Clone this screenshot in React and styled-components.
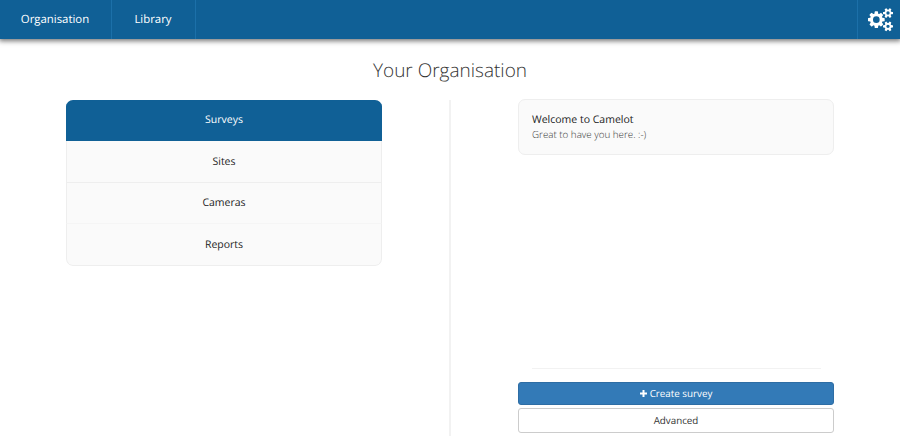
import React from "react";
import styled, { createGlobalStyle, css } from "styled-components";

const GlobalStyle = createGlobalStyle`
  * { box-sizing: border-box; }
  body {
    margin: 0;
    overflow: hidden;
    background: #fff;
    color: #333;
    font-family: "Open Sans", "Noto Sans", sans-serif;
    font-size: 10.5px;
    text-rendering: geometricPrecision;
  }
`;

const Page = styled.div`
  height: 442px;
  display: flex;
  flex-direction: column;
`;

const NavBar = styled.nav`
  flex: none;
  height: 39px;
  display: flex;
  background: #106096;
  box-shadow: 0 1px 5px 1px rgba(0, 0, 0, 0.55);
`;

const NavItem = styled.a`
  width: ${(p) => p.$width}px;
  display: flex;
  align-items: center;
  justify-content: center;
  border-right: 1px solid #1c70a9;
  padding-right: 1px;
  color: #fff;
  font-size: 11.4px;
  line-height: 17px;
`;

const SettingsItem = styled.a`
  width: 43px;
  margin-left: auto;
  padding: 1px 0 0 2px;
  display: flex;
  align-items: center;
  justify-content: center;
  border-left: 1px solid #1c70a9;
  color: #fff;
`;

const Title = styled.h1`
  margin: 17px 0 0;
  height: 44px;
  text-align: center;
  font-size: 19px;
  line-height: 28px;
  font-weight: 300;
`;

const Content = styled.main`
  height: 336px;
  display: grid;
  grid-template-columns: 316px 2px 316px;
  justify-content: space-between;
  padding: 0 66px;
`;

const Menu = styled.ul`
  align-self: start;
  height: 166px;
  margin: 0;
  padding: 0;
  list-style: none;
  display: grid;
  grid-template-rows: 41px 42px 41px 42px;
  background: #fafafa;
  border-radius: 7px;
  overflow: hidden;
`;

const MenuItem = styled.li`
  display: flex;
  align-items: center;
  justify-content: center;
  border: solid #eee;
  border-width: 0 1px 1px;
  color: #222;
  ${(p) =>
    p.$active &&
    css`
      background: #106096;
      border-color: #106096;
      color: #fff;
    `}
  &:nth-child(3) {
    border-bottom-color: #f5f5f5;
  }
  &:last-child {
    border-radius: 0 0 7px 7px;
  }
`;

const Divider = styled.div`
  background: #f2f2f2;
`;

const SidePanel = styled.section`
  display: flex;
  flex-direction: column;
`;

const Notice = styled.article`
  height: 56px;
  margin-top: -1px;
  padding: 14px 13px;
  border: 1px solid #eee;
  border-radius: 7px;
  background: #fafafa;
  line-height: 13.5px;
`;

const NoticeTitle = styled.div`
  color: #222;
`;

const NoticeText = styled.div`
  font-size: 9.8px;
  font-weight: 300;
`;

const Actions = styled.div`
  margin-top: auto;
  padding-bottom: 3px;
  display: flex;
  flex-direction: column;
  gap: 3px;
`;

const Rule = styled.hr`
  width: 289px;
  height: 1px;
  margin: 0 auto 10px;
  border: 0;
  background: #f2f2f2;
`;

const Button = styled.button`
  height: ${(p) => (p.$primary ? 23 : 25)}px;
  padding: 0;
  display: flex;
  align-items: center;
  justify-content: center;
  gap: 3px;
  border: 1px solid ${(p) => (p.$primary ? "#2e6da4" : "#ccc")};
  border-radius: 3px;
  background: ${(p) => (p.$primary ? "#337ab7" : "#fff")};
  color: ${(p) => (p.$primary ? "#fff" : "#333")};
  font: 9.8px/14px "Open Sans", "Noto Sans", sans-serif;
  text-rendering: inherit;
`;

const smallGear =
  "v140q0 16-149 31-12 27-30 52 51 113 51 138 0 4-4 7-122 71-124 71-8 0-46-47t-52-68q-20 2-30 2t-30-2q-14 21-52 68t-46 47q-2 0-124-71-4-3-4-7 0-25 51-138-18-25-30-52-149-15-149-31v-140q0-16 149-31 13-29 30-52-51-113-51-138 0-4 4-7 4-2 35-20t59-34 30-16q8 0 46 46.5t52 67.5q20-2 30-2t30 2q51-71 92-112l6-2q4 0 124 70 4 3 4 7 0 25-51 138 17 23 30 52 149 15 149 31z";

const largeGear =
  "M1280 805v185q0 10-7 19.5t-16 10.5l-155 24q-11 35-32 76 34 48 90 115 7 11 7 20 0 12-7 19-23 30-82.5 89.5t-78.5 59.5q-11 0-21-7l-115-90q-37 19-77 31-11 108-23 155-7 24-30 24h-186q-11 0-20-7.5t-10-17.5l-23-153q-34-10-75-31l-118 89q-7 7-20 7-11 0-21-8-144-133-144-160 0-9 7-19 10-14 41-53t47-61q-23-44-35-82l-152-24q-10-1-17-9.5t-7-19.5v-185q0-10 7-19.5t16-10.5l155-24q11-35 32-76-34-48-90-115-7-11-7-20 0-12 7-20 22-30 82-89t79-59q11 0 21 7l115 90q34-18 77-32 11-108 23-154 7-24 30-24h186q11 0 20 7.5t10 17.5l23 153q34 10 75 31l118-89q8-7 20-7 11 0 21 8 144 133 144 160 0 8-7 19-12 16-42 54t-45 60q23 48 34 82l152 23q10 2 17 10.5t7 19.5z";

const CogsIcon = () => (
  <svg width="25" height="23.33" viewBox="0 0 1920 1792" fill="currentColor" fillRule="evenodd" aria-hidden="true">
    <path d={`${largeGear}M896 896a256 256 0 1 0-512 0a256 256 0 1 0 512 0z`} />
    <path d={`M1920 1338${smallGear}M1664 1408a128 128 0 1 0-256 0a128 128 0 1 0 256 0z`} />
    <path d={`M1920 314${smallGear}M1664 384a128 128 0 1 0-256 0a128 128 0 1 0 256 0z`} />
  </svg>
);

const PlusIcon = () => (
  <svg width="7" height="7" viewBox="0 0 7 7" fill="currentColor" aria-hidden="true">
    <path d="M2.5 0h2v2.5H7v2H4.5V7h-2V4.5H0v-2h2.5z" />
  </svg>
);

const sections = ["Surveys", "Sites", "Cameras", "Reports"];

export default function App() {
  return (
    <>
      <GlobalStyle />
      <Page>
        <NavBar>
          <NavItem $width={112}>Organisation</NavItem>
          <NavItem $width={84}>Library</NavItem>
          <SettingsItem aria-label="Settings">
            <CogsIcon />
          </SettingsItem>
        </NavBar>
        <Title>Your Organisation</Title>
        <Content>
          <Menu>
            {sections.map((name, i) => (
              <MenuItem key={name} $active={i === 0}>
                {name}
              </MenuItem>
            ))}
          </Menu>
          <Divider />
          <SidePanel>
            <Notice>
              <NoticeTitle>Welcome to Camelot</NoticeTitle>
              <NoticeText>Great to have you here. :-)</NoticeText>
            </Notice>
            <Actions>
              <Rule />
              <Button $primary>
                <PlusIcon />
                Create survey
              </Button>
              <Button>Advanced</Button>
            </Actions>
          </SidePanel>
        </Content>
      </Page>
    </>
  );
}
